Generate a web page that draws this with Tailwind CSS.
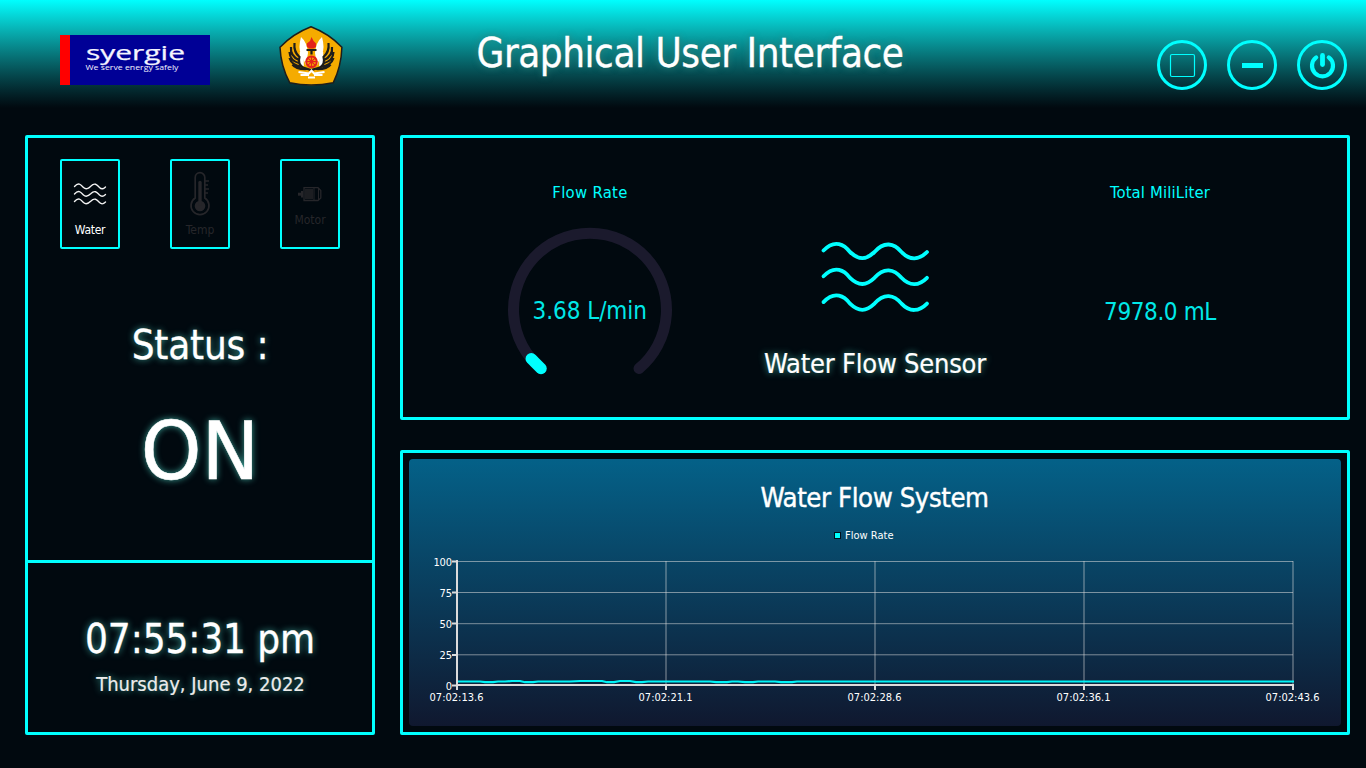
<!DOCTYPE html>
<html lang="en">
<head>
<meta charset="utf-8">
<title>Graphical User Interface</title>
<script src="https://cdn.jsdelivr.net/npm/@tailwindcss/browser@4"></script>
</head>
<body class="w-[1366px] h-[768px] overflow-hidden bg-[#01090f] text-white font-['DejaVu_Sans_Condensed','DejaVu_Sans',sans-serif]">
<div class="flex h-full flex-col">

  <header class="grid h-[108px] grid-cols-[400px_580px_1fr] bg-linear-to-b from-[#00ffff] to-[#01090f]">
    <div class="flex pl-[60px]">
      <svg class="mt-[35px] h-[50px] w-[150px]" viewBox="0 0 150 50">
        <rect width="150" height="50" fill="#000096"/>
        <rect width="10" height="50" fill="#ff0000"/>
        <g fill="#f4f4ff" font-family="Open Sans, sans-serif">
          <text x="26" y="24.6" font-size="20" stroke="#f4f4ff" stroke-width=".25" textLength="99" lengthAdjust="spacingAndGlyphs">syergie</text>
          <text x="25.5" y="35.3" font-size="7.4" textLength="93" lengthAdjust="spacingAndGlyphs">We serve energy safely</text>
        </g>
      </svg>
      <svg class="mt-[26px] ml-[69px] h-[60px] w-[64px]" viewBox="0 0 64 60">
        <path d="M32 .8C43 5 54 12 62.900 21.200C62.500 34 59.500 46 54.200 56.800C39 59.900 25 59.900 10.800 56.800C5 46 1.500 34 1 21.200C10 12 21 5 32 .8Z" fill="#f5ab00" stroke="#1d1d1b" stroke-width="1.500"/>
        <path d="M22 11Q19 22 22 28L27 39L29 27Q28 16 22 11ZM43 11Q46 22 43 28L38 39L36 27Q37 16 43 11Z" fill="#fff"/>
        <path d="M22.800 26V40M42.200 26V40" stroke="#fff" stroke-width="4"/>
        <g fill="none" stroke="#1d1d1b" stroke-width="2.200">
          <path d="M15.500 17Q14.500 26 20.500 31Q18.500 38 24 41.500L32 44L41 41.500Q46.500 38 44.500 31Q50.500 26 49.500 17"/>
          <path d="M12 21Q11 30 20 34M10.500 26Q11 35 20 37M10.500 32Q13 40 23 40.500M13.500 38.500Q17 43.500 28 43"/>
          <path d="M53 21Q54 30 45 34M54.500 26Q54 35 45 37M54.500 32Q52 40 42 40.500M51.500 38.500Q48 43.500 37 43"/>
        </g>
        <path d="M32.500 11Q34 15 37 17.500V21L34.500 22.500H30L27.800 20.500V17.500L31 15Z" fill="#e3221b"/>
        <path d="M27.500 24H37.500M32.500 25V28.500" stroke="#1d1d1b" stroke-width="2.200"/>
        <circle cx="32.500" cy="35.700" r="5.300" fill="none" stroke="#e3221b" stroke-width="2"/>
        <path d="M32.500 30V41.500M26.700 35.700H38.300M28.500 31.700L36.500 39.700M36.500 31.700L28.500 39.700" stroke="#e3221b" stroke-width="1.200"/>
        <path d="M19.500 46L30 47.500L32.500 44.500L35 47.500L45.500 46M21.500 49H30M35 49H43.500M29 51.500H36" fill="none" stroke="#fff" stroke-width="2"/>
      </svg>
    </div>
    <h1 class="h-[106px] text-center text-[40px] leading-[106px] tracking-[-0.47px] [-webkit-text-stroke:0.3px_white] text-shadow-[0_0_7px_#2f7f78]">Graphical User Interface</h1>
    <div class="mt-10 mr-[19px] flex justify-end gap-5">
      <button class="size-[50px]" aria-label="Maximize">
        <svg viewBox="0 0 50 50" fill="none" stroke="#0ff"><circle cx="25" cy="25" r="23.500" stroke-width="3"/><rect x="13.500" y="14.500" width="24" height="22" rx="1.500" stroke-width="1.200"/></svg>
      </button>
      <button class="size-[50px]" aria-label="Minimize">
        <svg viewBox="0 0 50 50" fill="none" stroke="#0ff"><circle cx="25" cy="25" r="23.500" stroke-width="3"/><path d="M15 25.500H36" stroke-width="5"/></svg>
      </button>
      <button class="size-[50px]" aria-label="Power">
        <svg viewBox="0 0 50 50" fill="none" stroke="#0ff" stroke-linecap="round"><circle cx="25" cy="25" r="23.500" stroke-width="3"/><path d="M19.200 17.400A10.500 10.500 0 1 0 31.800 17.400" stroke-width="4.200"/><path d="M25.500 15.500V24.500" stroke-width="4.800"/></svg>
      </button>
    </div>
  </header>

  <main class="mt-[27px] flex gap-[25px] pl-[25px]">
    <aside class="flex h-[600px] w-[350px] flex-col rounded-[2px] border-3 border-[#00ffff]">
      <nav class="mt-[21px] flex gap-[50px] pl-8 text-[12px] leading-[14px]">
        <div class="flex h-[90px] w-[60px] flex-col items-center rounded-[2px] border-2 border-[#00ffff]">
          <svg class="mt-5 h-[24px] w-[34px]" viewBox="0 0 34 24" fill="none" stroke="#f2f2f2" stroke-width="1.350" stroke-linecap="round">
            <path d="M1.500 5.500C6 .3 8.500 4.500 10.500 6.500C13.500 9.500 16.500 6.500 18 5C22 .8 24.500 4.500 26.500 6.500C29 9 31 7.500 32.500 6"/>
            <path d="M1.500 13C6 7.800 8.500 12 10.500 14C13.500 17 16.500 14 18 12.500C22 8.300 24.500 12 26.500 14C29 16.500 31 15 32.500 13.500"/>
            <path d="M1.500 20.500C6 15.300 8.500 19.500 10.500 21.500C13.500 24.500 16.500 21.500 18 20C22 15.800 24.500 19.500 26.500 21.500C29 24 31 22.500 32.500 21"/>
          </svg>
          <span class="mt-[18px] tracking-[-0.3px]">Water</span>
        </div>
        <div class="flex h-[90px] w-[60px] flex-col items-center rounded-[2px] border-2 border-[#00ffff] text-[#26262a]">
          <svg class="mt-[10px] h-[46px] w-[22px]" viewBox="0 0 22 46" fill="none" stroke="currentColor">
            <path d="M6.200 27V6.500a4.800 4.800 0 0 1 9.600 0V27a9 9 0 1 1-9.600 0Z" stroke-width="1.700"/>
            <circle cx="11" cy="35" r="5.300" fill="currentColor" stroke="none"/>
            <path d="M11 11.500V33" stroke-width="3.400" stroke-linecap="round"/>
            <path d="M16 10H20M16 14H19M16 18H20M16 22H19" stroke-width="1.400"/>
          </svg>
          <span class="mt-[6px]">Temp</span>
        </div>
        <div class="flex h-[90px] w-[60px] flex-col items-center rounded-[2px] border-2 border-[#00ffff] text-[#26262a]">
          <svg class="mt-[25px] h-[16px] w-[24px]" viewBox="0 0 24 16" fill="none" stroke="currentColor">
            <path d="M6 1.700H20L22.800 4.500V12L20 14.500H6Z" stroke-width="1.300"/>
            <rect x="7" y="3" width="8" height="10" fill="currentColor" fill-opacity=".75" stroke="none"/>
            <path d="M16 2V14M20.500 2V14" stroke-width="1"/>
            <path d="M0 8.200H3" stroke-width="3"/><path d="M4 5V11.500" stroke-width="2"/>
          </svg>
          <span class="mt-[11px]">Motor</span>
        </div>
      </nav>
      <section class="flex h-[311px] flex-col items-center pt-[72px] text-shadow-[0_0_7px_#3ea79c]">
        <p class="text-[40px] leading-[48px] tracking-[-0.2px] [-webkit-text-stroke:0.3px_white]">Status :</p>
        <p class="mt-[34px] scale-x-[1.06] text-[81px] leading-[96px] [-webkit-text-stroke:0.5px_white]">ON</p>
      </section>
      <section class="flex flex-1 flex-col items-center border-t-3 border-[#00ffff] pt-[52px] text-shadow-[0_0_7px_#3ea79c]">
        <p class="text-[40px] leading-[48px] tracking-[-0.1px] [-webkit-text-stroke:0.3px_white]">07:55:31 pm</p>
        <p class="mt-[9px] pl-px text-[20px] leading-[24px] text-[#ececec] [-webkit-text-stroke:0.2px_#ececec]">Thursday, June 9, 2022</p>
      </section>
    </aside>

    <div class="flex w-[950px] flex-col gap-[30px]">
      <section class="grid h-[285px] grid-cols-[374px_196px_1fr] rounded-[2px] border-3 border-[#00ffff]">
        <div class="flex flex-col items-center pt-[45px] text-[#00f2f2]">
          <h2 class="text-[16.5px] leading-[20px] tracking-[0.3px] text-[#00ffff]">Flow Rate</h2>
          <svg class="mt-[22px] h-[170px] w-[170px]" viewBox="505 225 170 170">
            <path d="M541 368.500A76.500 76.500 0 1 1 639 368.500" fill="none" stroke="#1b1a2d" stroke-width="11" stroke-linecap="round"/>
            <path d="M541 368.500L531.300 358.800" fill="none" stroke="#0ff" stroke-width="11.500" stroke-linecap="round"/>
            <text x="532.500" y="319.300" font-size="24" fill="#00e8e8" textLength="114.500">3.68 L/min</text>
          </svg>
        </div>
        <div class="flex flex-col items-center pt-[100px]">
          <svg class="h-[80px] w-[112px]" viewBox="0 0 112 80" fill="none" stroke="#0ff" stroke-width="3.800" stroke-linecap="round">
            <path d="M4.500 12.500C16 .5 25.500 7 31 14C40 22.500 47 22 55.500 14C65 3 75 5 82.500 14C91 23 100 22 108 14"/>
            <path d="M4.500 38.300C16 26.300 25.500 32.800 31 39.800C40 48.300 47 47.800 55.500 39.800C65 28.800 75 30.800 82.500 39.800C91 48.800 100 47.800 108 39.800"/>
            <path d="M4.500 64.100C16 52.100 25.500 58.600 31 65.600C40 74.100 47 73.600 55.500 65.600C65 54.600 75 56.600 82.500 65.600C91 74.600 100 73.600 108 65.600"/>
          </svg>
          <h2 class="mt-[30px] text-[27px] leading-[32px] tracking-[-0.22px] whitespace-nowrap [-webkit-text-stroke:0.2px_white] text-shadow-[0_0_7px_#3ea79c]">Water Flow Sensor</h2>
        </div>
        <div class="flex flex-col items-center pt-[45px] text-[#00ffff]">
          <h2 class="text-[16.5px] leading-[20px] tracking-[0.15px]">Total MiliLiter</h2>
          <p class="mt-[94px] text-[24px] leading-[30px] tracking-[-0.4px] text-[#00e8e8]">7978.0 mL</p>
        </div>
      </section>

      <section class="h-[285px] rounded-[2px] border-3 border-[#00ffff] pt-[6px] pl-[6px]">
        <svg class="h-[267px] w-[932px]" viewBox="409 459 932 267">
          <defs><linearGradient id="plot" x1="0" y1="0" x2="0" y2="1"><stop offset="0" stop-color="#046188"/><stop offset="1" stop-color="#10182f"/></linearGradient></defs>
          <rect x="409" y="459" width="932" height="267" rx="4" fill="url(#plot)"/>
          <text x="760.500" y="506.700" font-size="27.300" fill="#fff" stroke="#fff" stroke-width=".4" textLength="228.500">Water Flow System</text>
          <rect x="834.500" y="532.500" width="6" height="6" fill="#0ff" stroke="#00101c"/>
          <text x="845" y="539" font-size="11" fill="#fff" textLength="48.500">Flow Rate</text>
          <g stroke="#dadada" stroke-opacity=".55">
            <path d="M457 561.500H1293M457 592.500H1293M457 623.700H1293M457 654.800H1293"/>
            <path d="M666 561V685M875 561V685M1084 561V685M1293 561V685" stroke-width="2" stroke-opacity=".3"/>
          </g>
          <path d="M457 560V690M456 685H1294M666 685V690M875 685V690M1084 685V690M1293 685V690" stroke="#dcdcdc" stroke-width="2"/>
          <path d="M452 561.500H457M452 592.500H457M452 623.500H457M452 655H457M452 685.500H457" stroke="#dcdcdc" stroke-width="1.800"/>
          <path d="M458 681.500H480L485 682.200H493L498 681.500H505L512 681H520L525 682.200H533L538 681.500H570L580 681H602L607 682.200H614L620 681H630L636 682.200H642L648 681.500H710L716 682.200H727L732 681.500H738L745 682.200H753L758 681.500H775L781 682.200H792L797 681.500H1294" fill="none" stroke="#00f4f6" stroke-width="2.200"/>
          <g font-size="11" fill="#fff" text-anchor="end">
            <text x="452" y="566" textLength="18.500">100</text><text x="452" y="597">75</text><text x="452" y="628">50</text><text x="452" y="659">25</text><text x="452" y="690">0</text>
          </g>
          <g font-size="11" fill="#fff" text-anchor="middle">
            <text x="456.500" y="701">07:02:13.6</text><text x="665.500" y="701">07:02:21.1</text><text x="874.500" y="701">07:02:28.6</text><text x="1083.500" y="701">07:02:36.1</text><text x="1292.500" y="701">07:02:43.6</text>
          </g>
        </svg>
      </section>
    </div>
  </main>
</div>
</body>
</html>
